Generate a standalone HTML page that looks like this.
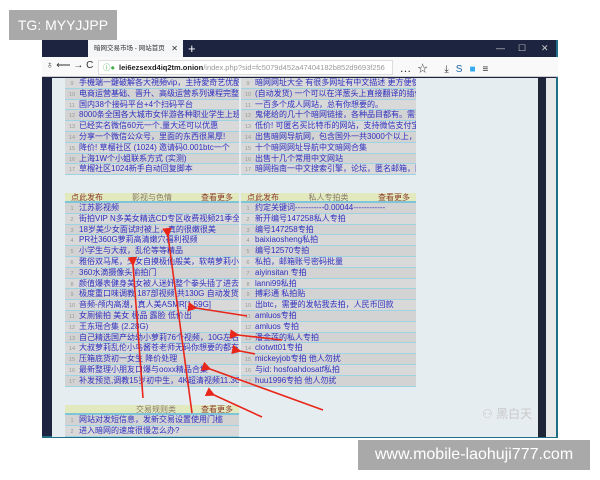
<!DOCTYPE html>
<html><head><meta charset="utf-8"><style>
*{margin:0;padding:0;box-sizing:border-box}
body{width:600px;height:480px;background:#fff;position:relative;overflow:hidden;font-family:"Liberation Sans","Noto Sans CJK SC",sans-serif}
.tg{position:absolute;left:9px;top:10px;width:108px;height:30px;background:#a9a9a9;color:#fff;font-size:14px;line-height:30px;text-align:center;white-space:nowrap}
.wm{position:absolute;left:358px;top:440px;width:232px;height:30px;background:#a9a9a9;color:#fff;font-size:16px;line-height:30px;text-align:center}
.win{position:absolute;left:42px;top:40px;width:516px;height:398px;background:#1d2440;border-bottom:2px solid #1f6e86;border-right:2px solid #1f6e86}
.tab{position:absolute;left:88px;top:40px;width:95px;height:17px;background:#f5f6f7;font-size:6.5px;color:#333;line-height:17px;padding-left:6px;white-space:nowrap;overflow:hidden}
.tab b{position:absolute;right:5px;top:0;font-weight:normal;font-size:8px;background:#f5f6f7}
.plus{position:absolute;left:188px;top:40px;color:#fff;font-size:13px;line-height:17px}
.ctl{position:absolute;top:40px;color:#ccc;font-size:9px;line-height:17px}
.nav{position:absolute;left:42px;top:57px;width:516px;height:20px;background:#f9f9fa;border-bottom:1px solid #ccc}
.url{position:absolute;left:98px;top:60px;width:295px;height:15px;border:1px solid #ddd;background:#fff;font-size:7.5px;line-height:13px;padding-left:20px;color:#999;white-space:nowrap;overflow:hidden}
.url b{color:#222}
.content{position:absolute;left:52px;top:78px;width:486px;height:359px;background:#e6edf1}
.sb{position:absolute;left:538px;top:78px;width:8px;height:359px;background:#1d2536}
.sb2{position:absolute;left:546px;top:78px;width:10px;height:359px;background:#e8e8e8}
.t{position:absolute;font-size:8px}
.r{height:10.8px;line-height:10px;background:#d3d3d3;border-bottom:1px solid #9fd3e4;color:#2f2fc0;white-space:nowrap;overflow:hidden}
.r:nth-child(odd){background:#d9d9d9}
.r i{font-style:normal;color:#999;font-size:5.5px;display:inline-block;width:14px;text-align:center}
.h{height:10px;background:#e2e9bf;border-bottom:2px solid #7fc5da;color:#8a3a2a;line-height:9px;display:flex;justify-content:space-between;padding:0 6px;font-size:8px}
.h span:nth-child(2){color:#8a7a6a}
</style></head><body>
<div class="tg">TG: MYYJJPP</div>
<div class="win"></div>
<div class="tab">暗网交易市场 - 网站首页<b>✕</b></div>
<div class="plus">+</div>
<div class="ctl" style="left:496px">—</div><div class="ctl" style="left:518px">☐</div><div class="ctl" style="left:541px">✕</div>
<div class="nav"></div>
<div style="position:absolute;left:46px;top:60px;font-size:10px;color:#333">♁ ⟵ → C</div>
<div class="url"><span style="position:absolute;left:4px;color:#4a4">ⓘ●</span><b>lei6ezsexd4iq2tm.onion</b>/index.php?sid=fc5079d452a47404182b852d9693f256</div>
<div style="position:absolute;left:400px;top:60px;font-size:10px;color:#333;letter-spacing:7px">⋯☆ ⤓<span style="color:#26a">S</span><span style="color:#3ae">■</span>≡</div>
<div class="content"></div><div class="sb"></div><div class="sb2"></div>

<div class="t" style="left:65px;top:78px;width:174px">
<div class="r"><i>9</i>手機端一鍵破解各大視頻vip，主持愛奇艺优酷腾讯</div>
<div class="r"><i>10</i>电商运营基础、晋升、高级运营系列课程完整版</div>
<div class="r"><i>11</i>国内38个接码平台+4个扫码平台</div>
<div class="r"><i>12</i>8000条全国各大城市女伴游各种职业学生上班族数</div>
<div class="r"><i>13</i>已经实名微信60元一个,量大还可以优惠</div>
<div class="r"><i>14</i>分享一个微信公众号，里面的东西很黑厚!</div>
<div class="r"><i>15</i>降价! 草榴社区 (1024) 邀请码0.001btc一个</div>
<div class="r"><i>16</i>上海1W个小姐联系方式 (实测)</div>
<div class="r"><i>17</i>草榴社区1024新手自动回复脚本</div>
</div>
<div class="t" style="left:241px;top:78px;width:175px">
<div class="r"><i>9</i>暗网网址大全 有很多网址有中文描述 更方便使用</div>
<div class="r"><i>10</i>(自动发货) 一个可以在洋葱头上直接翻译的插件!</div>
<div class="r"><i>11</i>一百多个成人网站，总有你想要的。</div>
<div class="r"><i>12</i>鬼佬给的几十个暗网链接，各种品目都有。需要的</div>
<div class="r"><i>13</i>低价! 可匿名买比特币的网站，支持微信支付宝银行</div>
<div class="r"><i>14</i>出售暗网导航网，包含国外一共3000个以上，国内</div>
<div class="r"><i>15</i>十个暗网网址导航中文暗网合集</div>
<div class="r"><i>16</i>出售十几个常用中文网站</div>
<div class="r"><i>17</i>暗网指南一中文搜索引擎，论坛，匿名邮箱，网盘</div>
</div>

<div class="t" style="left:65px;top:193px;width:174px">
<div class="h"><span>点此发布</span><span>影视与色情</span><span>查看更多</span></div>
<div class="r"><i>1</i>江苏影视频</div>
<div class="r"><i>2</i>街拍VIP N多美女精选CD专区收费视频21季全 超清</div>
<div class="r"><i>3</i>18岁美少女面试时被上，真的很嫩很美</div>
<div class="r"><i>4</i>PR社360G萝莉高清嫩穴福利视频</div>
<div class="r"><i>5</i>小学生与大叔，乱伦等等精品</div>
<div class="r"><i>6</i>雅俗双马尾，少女自摸极仙般美，软萌萝莉小仙70g</div>
<div class="r"><i>7</i>360水滴摄像头偷拍门</div>
<div class="r"><i>8</i>颜值爆表健身美女被人迷奸整个拳头插了进去了</div>
<div class="r"><i>9</i>极度重口味调教 187部视频 共130G 自动发货</div>
<div class="r"><i>10</i>音频-颅内高潮，真人美ASMR[1.59G]</div>
<div class="r"><i>11</i>女厕偷拍 美女 极品 露脸 低价出</div>
<div class="r"><i>12</i>王东瑶合集 (2.28G)</div>
<div class="r"><i>13</i>自己精选国产幼幼小萝莉76个视频，10G左右</div>
<div class="r"><i>14</i>大叔萝莉乱伦小鸟酱苍老师无码你想要的都在这</div>
<div class="r"><i>15</i>压箱底货初一女生 降价处理</div>
<div class="r"><i>16</i>最新整理小朋友口爆与ooxx精品合集</div>
<div class="r"><i>17</i>补发预览,调教15岁初中生，4K超清视频11.3GB</div>
</div>
<div class="t" style="left:241px;top:193px;width:175px">
<div class="h"><span>点此发布</span><span>私人专拍类</span><span>查看更多</span></div>
<div class="r"><i>1</i>约定关键词-----------0.00044------------</div>
<div class="r"><i>2</i>新开编号147258私人专拍</div>
<div class="r"><i>3</i>编号147258专拍</div>
<div class="r"><i>4</i>baixiaosheng私拍</div>
<div class="r"><i>5</i>编号12570专拍</div>
<div class="r"><i>6</i>私拍，邮箱账号密码批量</div>
<div class="r"><i>7</i>aiyinsitan 专拍</div>
<div class="r"><i>8</i>lanni99私拍</div>
<div class="r"><i>9</i>搏彩通 私拍贴</div>
<div class="r"><i>10</i>出btc，需要的发帖我去拍，人民币回款</div>
<div class="r"><i>11</i>amluos专拍</div>
<div class="r"><i>12</i>amluos 专拍</div>
<div class="r"><i>13</i>潘金莲的私人专拍</div>
<div class="r"><i>14</i>clotwtt01专拍</div>
<div class="r"><i>15</i>mickeyjob专拍 他人勿扰</div>
<div class="r"><i>16</i>与id: hosfoahdosatf私拍</div>
<div class="r"><i>17</i>huu1996专拍 他人勿扰</div>
</div>

<div class="t" style="left:65px;top:405px;width:174px">
<div class="h"><span></span><span style="margin-left:40px">交易规则类</span><span>查看更多</span></div>
<div class="r"><i>1</i>网站对发短信息，发新交易设置使用门槛</div>
<div class="r"><i>2</i>进入暗网的速度很慢怎么办?</div>
</div>

<div style="position:absolute;left:482px;top:405px;color:#c8c8c8;font-size:12px">⚇ 黑白天</div>

<svg style="position:absolute;left:0;top:0" width="600" height="480">
<defs><marker id="a" markerWidth="6" markerHeight="6" refX="1" refY="3" orient="auto"><path d="M6,0 L0,3 L6,6 Z" fill="#e8261a"/></marker></defs>
<g stroke="#e8261a" stroke-width="1.6" fill="none" marker-end="url(#a)">
<line x1="247" y1="316" x2="196" y2="308"/>
<line x1="282" y1="340" x2="238" y2="335"/>
<line x1="255" y1="354" x2="240" y2="351"/>
<line x1="323" y1="410" x2="210" y2="369"/>
<line x1="262" y1="417" x2="214" y2="395"/>
<line x1="192" y1="413" x2="168" y2="236"/>
<line x1="143" y1="398" x2="133" y2="265"/>
</g></svg>
<div class="wm">www.mobile-laohuji777.com</div>
</body></html>
